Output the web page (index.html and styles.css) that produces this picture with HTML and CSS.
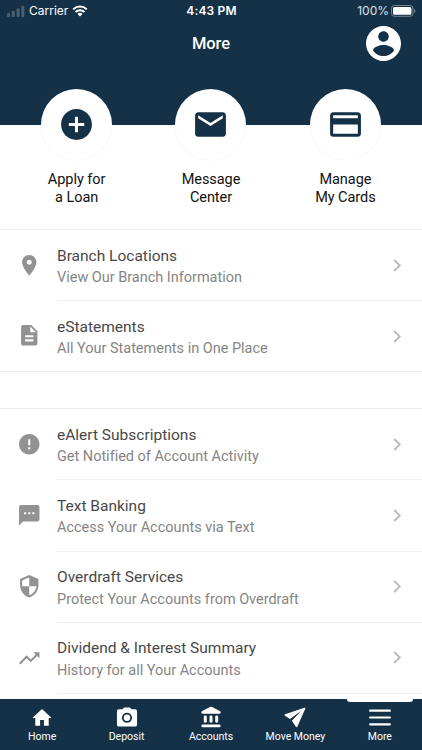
FILE: index.html
```html
<!DOCTYPE html>
<html lang="en">
<head>
<meta charset="utf-8">
<title>More</title>
<link rel="stylesheet" href="styles.css">
</head>
<body>
<div class="app">
  <header class="header">
    <div class="status">
      <div class="status-left">
        <svg class="signal" viewBox="0 0 18 12"><rect x="0" y="8" width="3" height="4" rx=".8"/><rect x="4.800" y="6" width="3" height="6" rx=".8"/><rect x="9.600" y="3.500" width="3" height="8.500" rx=".8"/><rect x="14.400" y="1" width="3" height="11" rx=".8"/></svg>
        <span class="carrier">Carrier</span>
        <svg class="wifi" viewBox="0 0 16 12"><path d="M1.200 4.400a9.700 9.700 0 0 1 13.600 0M3.600 7a6.300 6.300 0 0 1 8.800 0" fill="none" stroke="#fff" stroke-width="2"/><path d="M8 11.400 5.500 8.900a3.600 3.600 0 0 1 5 0z" fill="#fff"/></svg>
      </div>
      <div class="clock">4:43 PM</div>
      <div class="status-right">
        <span class="percent">100%</span>
        <svg class="battery" viewBox="0 0 25 12"><rect x=".5" y=".5" width="21.400" height="10.800" rx="2.800" fill="none" stroke="#748593"/><rect x="2" y="2" width="18.400" height="7.800" rx="1.500" fill="#fff"/><path d="M23.200 4v4c1.500-.6 1.500-3.400 0-4z" fill="#8b99a5"/></svg>
      </div>
    </div>
    <div class="titlebar">
      <h1>More</h1>
      <svg class="profile" viewBox="2 2 20 20"><path fill="#fff" d="M12 2C6.480 2 2 6.480 2 12s4.480 10 10 10 10-4.480 10-10S17.520 2 12 2zm0 3c1.660 0 3 1.340 3 3s-1.340 3-3 3-3-1.340-3-3 1.340-3 3-3zm0 14.200c-2.500 0-4.710-1.280-6-3.220.03-1.990 4-3.080 6-3.080 1.990 0 5.970 1.090 6 3.080-1.290 1.940-3.500 3.220-6 3.220z"/></svg>
    </div>
  </header>

  <section class="actions">
    <a class="action"><span class="disc"><svg viewBox="0 0 24 24"><path d="M12 2C6.480 2 2 6.480 2 12s4.480 10 10 10 10-4.480 10-10S17.520 2 12 2zm5 11h-4v4h-2v-4H7v-2h4V7h2v4h4v2z"/></svg></span><span class="label">Apply for<br>a Loan</span></a>
    <a class="action"><span class="disc"><svg viewBox="0 0 24 24"><path d="M20 4H4c-1.100 0-1.990.9-1.990 2L2 18c0 1.100.9 2 2 2h16c1.100 0 2-.9 2-2V6c0-1.100-.9-2-2-2zm0 4l-8 5-8-5V6l8 5 8-5v2z"/></svg></span><span class="label">Message<br>Center</span></a>
    <a class="action"><span class="disc"><svg viewBox="0 0 24 24"><path d="M20 4H4c-1.110 0-1.990.89-1.990 2L2 18c0 1.110.89 2 2 2h16c1.110 0 2-.89 2-2V6c0-1.110-.89-2-2-2zm0 14H4v-6h16v6zm0-10H4V6h16v2z"/></svg></span><span class="label">Manage<br>My Cards</span></a>
  </section>

  <main class="lists">
    <ul class="list">
      <li class="row"><svg class="icon" viewBox="0 0 24 24"><path d="M12 2C8.130 2 5 5.130 5 9c0 5.250 7 13 7 13s7-7.750 7-13c0-3.870-3.130-7-7-7zm0 9.500c-1.380 0-2.500-1.120-2.500-2.500s1.120-2.500 2.500-2.500 2.500 1.120 2.500 2.500-1.120 2.500-2.500 2.500z"/></svg><div class="body"><div class="text"><div class="name">Branch Locations</div><div class="desc">View Our Branch Information</div></div><svg class="chevron" viewBox="0 0 9 13"><path d="M1.200 1l5.600 5.500L1.200 12"/></svg></div></li>
      <li class="row"><svg class="icon" viewBox="0 0 24 24"><path d="M14 2H6c-1.100 0-1.990.9-1.990 2L4 20c0 1.100.89 2 1.990 2H18c1.100 0 2-.9 2-2V8l-6-6zm2 16H8v-2h8v2zm0-4H8v-2h8v2zm-3-5V3.500L18.500 9H13z"/></svg><div class="body"><div class="text"><div class="name">eStatements</div><div class="desc">All Your Statements in One Place</div></div><svg class="chevron" viewBox="0 0 9 13"><path d="M1.200 1l5.600 5.500L1.200 12"/></svg></div></li>
    </ul>
    <ul class="list">
      <li class="row"><svg class="icon" viewBox="0 0 24 24"><path d="M12 2C6.480 2 2 6.480 2 12s4.480 10 10 10 10-4.480 10-10S17.520 2 12 2zm1 15h-2v-2h2v2zm0-4h-2V7h2v6z"/></svg><div class="body"><div class="text"><div class="name">eAlert Subscriptions</div><div class="desc">Get Notified of Account Activity</div></div><svg class="chevron" viewBox="0 0 9 13"><path d="M1.200 1l5.600 5.500L1.200 12"/></svg></div></li>
      <li class="row"><svg class="icon" viewBox="0 0 24 24"><path d="M20 2H4c-1.100 0-1.990.9-1.990 2L2 22l4-4h14c1.100 0 2-.9 2-2V4c0-1.100-.9-2-2-2zM9 11H7V9h2v2zm4 0h-2V9h2v2zm4 0h-2V9h2v2z"/></svg><div class="body"><div class="text"><div class="name">Text Banking</div><div class="desc">Access Your Accounts via Text</div></div><svg class="chevron" viewBox="0 0 9 13"><path d="M1.200 1l5.600 5.500L1.200 12"/></svg></div></li>
      <li class="row"><svg class="icon" viewBox="0 0 24 24"><path d="M12 1L3 5v6c0 5.550 3.840 10.740 9 12 5.160-1.260 9-6.450 9-12V5l-9-4zm0 10.990h7c-.53 4.120-3.280 7.790-7 8.940V12H5V6.300l7-3.110v8.800z"/></svg><div class="body"><div class="text"><div class="name">Overdraft Services</div><div class="desc">Protect Your Accounts from Overdraft</div></div><svg class="chevron" viewBox="0 0 9 13"><path d="M1.200 1l5.600 5.500L1.200 12"/></svg></div></li>
      <li class="row"><svg class="icon" viewBox="0 0 24 24"><path d="M16 6l2.290 2.290-4.880 4.880-4-4L2 16.590 3.410 18l6-6 4 4 6.300-6.290L22 12V6z"/></svg><div class="body"><div class="text"><div class="name">Dividend &amp; Interest Summary</div><div class="desc">History for all Your Accounts</div></div><svg class="chevron" viewBox="0 0 9 13"><path d="M1.200 1l5.600 5.500L1.200 12"/></svg></div></li>
    </ul>
  </main>

  <nav class="tabs">
    <a class="tab"><svg viewBox="0 0 24 24"><path d="M10 20.500v-6h4v6h5v-8h3L12 3 2 12.500h3v8z"/></svg>Home</a>
    <a class="tab"><svg viewBox="0 0 24 24"><path fill-rule="evenodd" d="M9 1.500 7.200 3.500H3.500c-1.100 0-2 .9-2 2v14c0 1.100.9 2 2 2h17c1.100 0 2-.9 2-2v-14c0-1.100-.9-2-2-2h-3.700L15 1.500zM12 7a5.300 5.300 0 1 1 0 10.600A5.300 5.300 0 0 1 12 7zm0 1.900a3.400 3.400 0 1 0 0 6.800 3.400 3.400 0 0 0 0-6.800z"/></svg>Deposit</a>
    <a class="tab"><svg viewBox="0 0 24 24"><path d="M11.300.9 2.500 5.500C1.400 6.200 1.800 8 3 8h18c1.200 0 1.600-1.800.5-2.500L12.700.9c-.5-.2-.9-.2-1.400 0z"/><rect x="4.500" y="9.800" width="3.100" height="7.600" rx="1.400"/><rect x="10.450" y="9.800" width="3.100" height="7.600" rx="1.400"/><rect x="16.400" y="9.800" width="3.100" height="7.600" rx="1.400"/><rect x="2" y="19.200" width="20" height="3" rx="1.400"/></svg>Accounts</a>
    <a class="tab"><svg viewBox="0 0 24 24"><path d="M21.700 1.900 1.700 8.600c-.8.300-.8 1.300-.1 1.700l5.100 3.200L18.600 4.900 8.700 15.300l4.200 6.300c.5.700 1.300.6 1.600-.1l8.200-18.700c.2-.6-.4-1.100-1-.9z"/></svg>Move Money</a>
    <a class="tab active"><svg viewBox="0 0 24 24"><path d="M1.700 4.900h20.600M1.700 12h20.600M1.700 19.100h20.600" fill="none" stroke="#fff" stroke-width="2.300" stroke-linecap="round"/></svg>More</a>
  </nav>
</div>
</body>
</html>
```
FILE: styles.css
```css
* { box-sizing: border-box; }
body { margin: 0; background: #fff; font-family: Roboto, "Liberation Sans", sans-serif; }
.app { width: 422px; height: 750px; display: flex; flex-direction: column; overflow: hidden; }
svg { display: block; flex: none; }

.header { height: 125px; flex: none; background: #153147; color: #fff; }
.status { height: 22px; display: grid; grid-template-columns: 1fr auto 1fr; align-items: center; padding: 0 6px 0 7px; font-family: Inter, Roboto, sans-serif; font-size: 12px; line-height: 22px; }
.status-left, .status-right { display: flex; align-items: center; }
.status-right { justify-content: flex-end; gap: 2px; }
.signal { width: 18px; height: 12px; fill: #4a6071; margin: -1px 4px 0 0; }
.carrier { letter-spacing: 0; }
.wifi { width: 16px; height: 12px; margin: -1px 0 0 4px; }
.clock { font-weight: 600; letter-spacing: .15px; }
.percent { color: #dde2e6; }
.battery { width: 25px; height: 12px; margin-top: -1px; }
.titlebar { height: 42px; display: grid; grid-template-columns: 1fr auto 1fr; align-items: center; padding-right: 21px; padding-left: 21px; }
.titlebar h1 { grid-column: 2; margin: 2px 0 0; font-size: 16.500px; font-weight: 500; line-height: 20px; letter-spacing: -.1px; }
.profile { width: 35px; height: 35px; justify-self: end; }

.actions { display: flex; justify-content: center; height: 104px; flex: none; }
.action { width: 134.400px; margin-top: -36px; display: flex; flex-direction: column; align-items: center; }
.disc { width: 71px; height: 71px; flex: none; border-radius: 50%; background: #fff; box-shadow: 0 0 2px rgba(0, 0, 0, .07); display: flex; align-items: center; justify-content: center; }
.disc svg { width: 37px; height: 37px; fill: #153147; }
.label { margin-top: 10.500px; text-align: center; font-size: 14.500px; line-height: 18.700px; letter-spacing: -.05px; color: #111; }

.lists { flex: 1; min-height: 0; overflow: hidden; display: flex; flex-direction: column; gap: 36px; }
.list { flex: none; list-style: none; margin: 0; padding: 0; border-top: 1px solid #ededed; }
.list:first-child .row:last-child { height: 70.750px; border-bottom: 1px solid #ededed; }
.list:first-child .row:last-child .body { border-bottom: 0; }
.row { height: 71.250px; display: flex; align-items: center; padding-left: 16.500px; }
.icon { width: 24.500px; height: 24.500px; fill: #929292; margin-bottom: 1px; }
.body { flex: 1; align-self: stretch; margin-left: 16px; padding-right: 20.500px; border-bottom: 1px solid #f0f0f0; display: flex; align-items: center; justify-content: space-between; }
.text { padding-top: 4px; }
.name { font-size: 15.500px; line-height: 21.500px; color: #484848; }
.desc { font-size: 14.500px; line-height: 21.500px; letter-spacing: -.02px; color: #858585; }
.chevron { width: 9px; height: 13px; fill: none; stroke: #bababc; stroke-width: 1.800; }

.tabs { height: 51px; flex: none; display: flex; background: #153147; color: #fff; }
.tab { position: relative; flex: 1 1 0; display: flex; flex-direction: column; align-items: center; padding-top: 7px; font-size: 10.500px; line-height: 16px; letter-spacing: 0; }
.tab svg { width: 24px; height: 23px; fill: #fff; }
.active::before { content: ""; position: absolute; top: 0; left: 9px; width: 66px; height: 3px; background: #fff; border-radius: 0 0 3px 3px; }
```
